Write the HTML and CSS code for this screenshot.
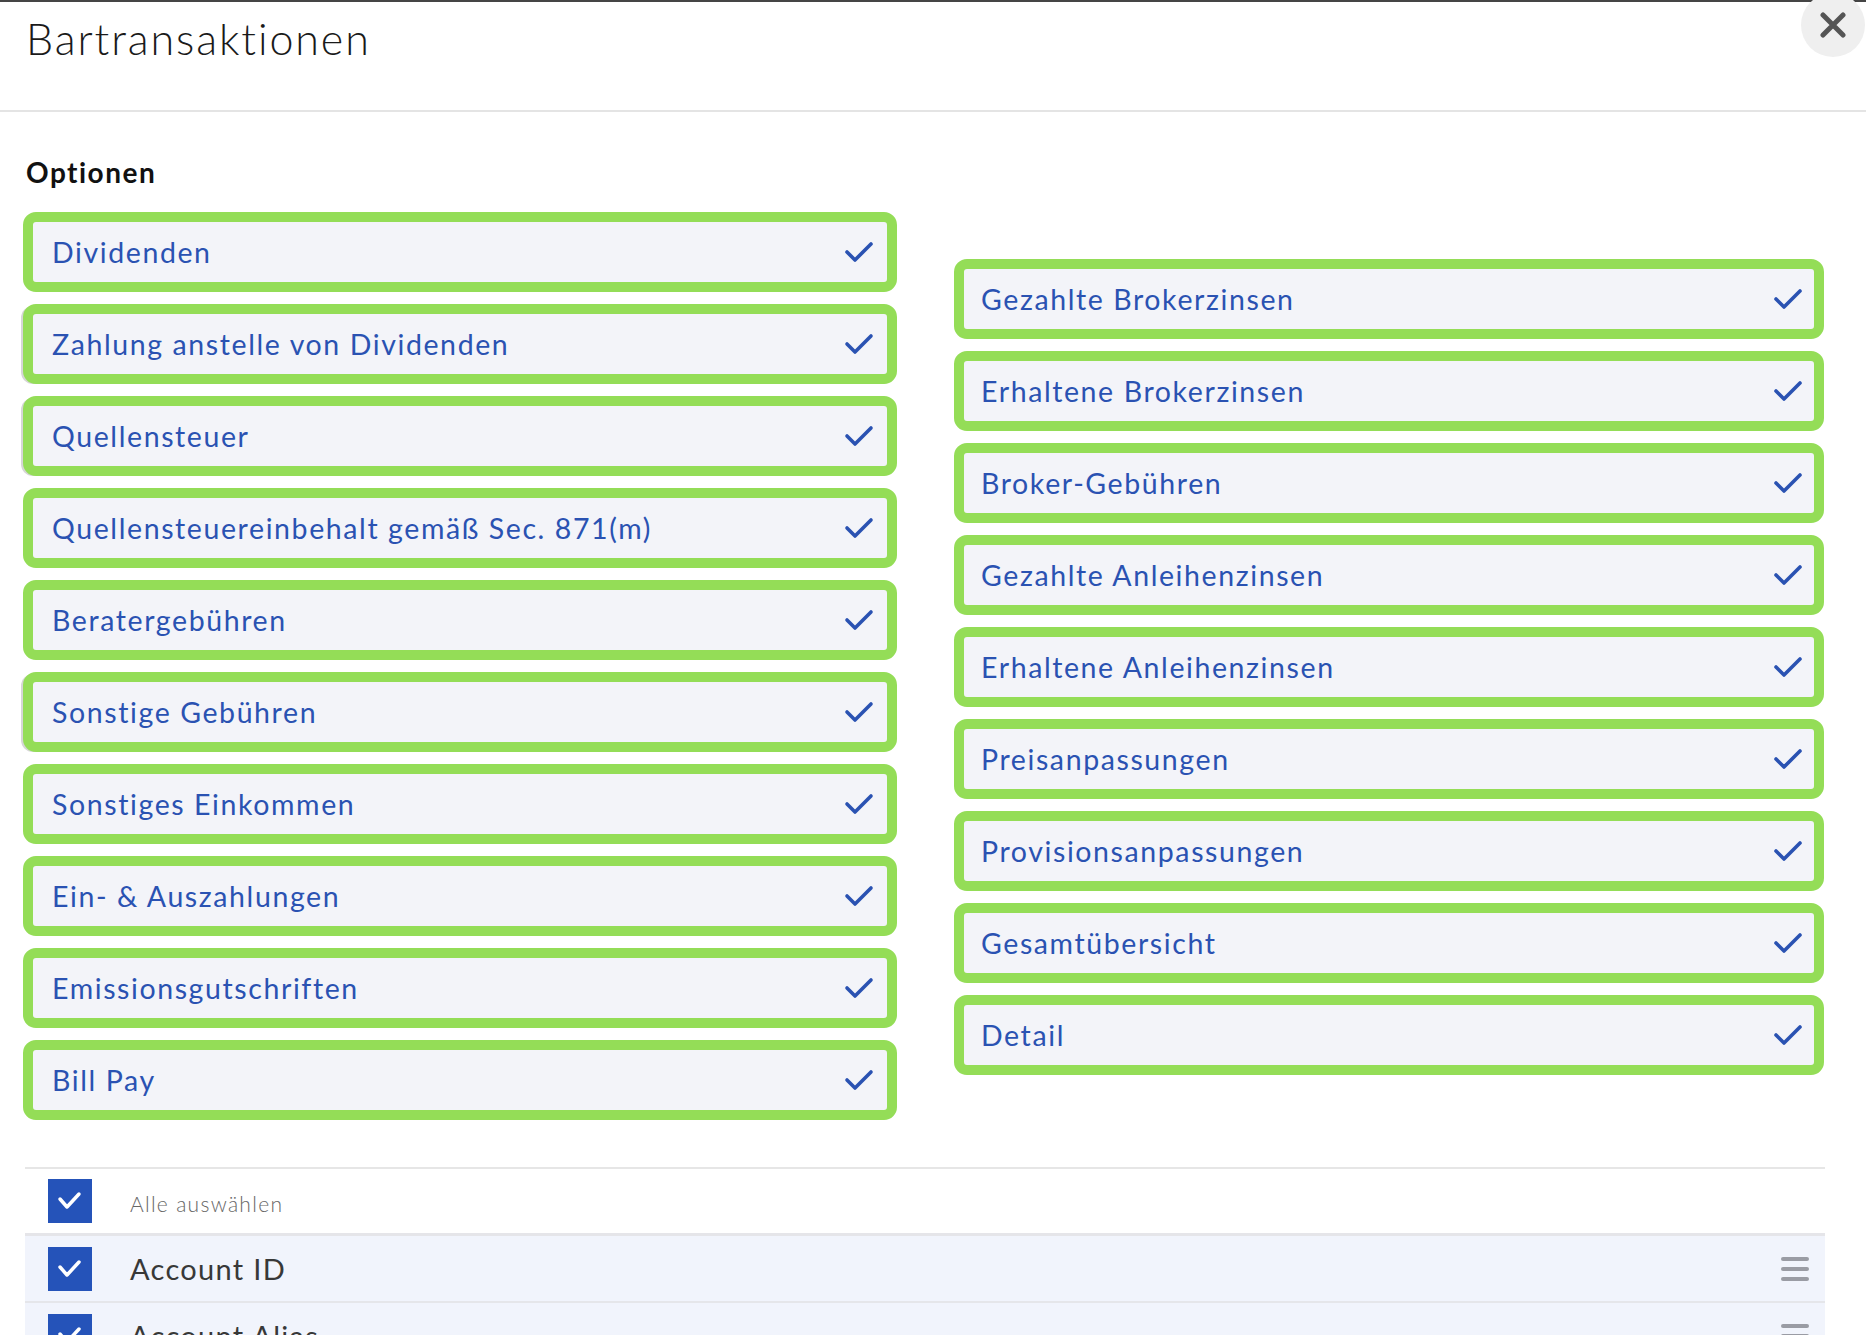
FILE: index.html
```html
<!DOCTYPE html>
<html lang="de">
<head>
<meta charset="utf-8">
<title>Bartransaktionen</title>
<link rel="stylesheet" href="styles.css">
</head>
<body>
<div class="modal">
  <header class="modal-header">
    <h1 class="title">Bartransaktionen</h1>
    <button class="close" aria-label="Schließen">
      <svg width="26" height="26" viewBox="0 0 26 26"><path d="M3 3 L23 23 M23 3 L3 23" stroke="#555" stroke-width="5" stroke-linecap="round" fill="none"/></svg>
    </button>
  </header>

  <section class="options">
    <h2 class="options-title">Optionen</h2>
    <div class="option-grid">
      <div class="col col-left">
        <div class="opt"><span>Dividenden</span><svg class="chk" width="30" height="22" viewBox="0 0 30 22"><polyline points="3,11 11,19 27,3" /></svg></div>
        <div class="opt shadow"><span>Zahlung anstelle von Dividenden</span><svg class="chk" width="30" height="22" viewBox="0 0 30 22"><polyline points="3,11 11,19 27,3" /></svg></div>
        <div class="opt shadow"><span>Quellensteuer</span><svg class="chk" width="30" height="22" viewBox="0 0 30 22"><polyline points="3,11 11,19 27,3" /></svg></div>
        <div class="opt"><span>Quellensteuereinbehalt gemäß Sec. 871(m)</span><svg class="chk" width="30" height="22" viewBox="0 0 30 22"><polyline points="3,11 11,19 27,3" /></svg></div>
        <div class="opt"><span>Beratergebühren</span><svg class="chk" width="30" height="22" viewBox="0 0 30 22"><polyline points="3,11 11,19 27,3" /></svg></div>
        <div class="opt shadow"><span>Sonstige Gebühren</span><svg class="chk" width="30" height="22" viewBox="0 0 30 22"><polyline points="3,11 11,19 27,3" /></svg></div>
        <div class="opt"><span>Sonstiges Einkommen</span><svg class="chk" width="30" height="22" viewBox="0 0 30 22"><polyline points="3,11 11,19 27,3" /></svg></div>
        <div class="opt"><span>Ein- &amp; Auszahlungen</span><svg class="chk" width="30" height="22" viewBox="0 0 30 22"><polyline points="3,11 11,19 27,3" /></svg></div>
        <div class="opt"><span>Emissionsgutschriften</span><svg class="chk" width="30" height="22" viewBox="0 0 30 22"><polyline points="3,11 11,19 27,3" /></svg></div>
        <div class="opt"><span>Bill Pay</span><svg class="chk" width="30" height="22" viewBox="0 0 30 22"><polyline points="3,11 11,19 27,3" /></svg></div>
      </div>
      <div class="col col-right">
        <div class="opt"><span>Gezahlte Brokerzinsen</span><svg class="chk" width="30" height="22" viewBox="0 0 30 22"><polyline points="3,11 11,19 27,3" /></svg></div>
        <div class="opt"><span>Erhaltene Brokerzinsen</span><svg class="chk" width="30" height="22" viewBox="0 0 30 22"><polyline points="3,11 11,19 27,3" /></svg></div>
        <div class="opt"><span>Broker-Gebühren</span><svg class="chk" width="30" height="22" viewBox="0 0 30 22"><polyline points="3,11 11,19 27,3" /></svg></div>
        <div class="opt"><span>Gezahlte Anleihenzinsen</span><svg class="chk" width="30" height="22" viewBox="0 0 30 22"><polyline points="3,11 11,19 27,3" /></svg></div>
        <div class="opt"><span>Erhaltene Anleihenzinsen</span><svg class="chk" width="30" height="22" viewBox="0 0 30 22"><polyline points="3,11 11,19 27,3" /></svg></div>
        <div class="opt"><span>Preisanpassungen</span><svg class="chk" width="30" height="22" viewBox="0 0 30 22"><polyline points="3,11 11,19 27,3" /></svg></div>
        <div class="opt"><span>Provisionsanpassungen</span><svg class="chk" width="30" height="22" viewBox="0 0 30 22"><polyline points="3,11 11,19 27,3" /></svg></div>
        <div class="opt"><span>Gesamtübersicht</span><svg class="chk" width="30" height="22" viewBox="0 0 30 22"><polyline points="3,11 11,19 27,3" /></svg></div>
        <div class="opt"><span>Detail</span><svg class="chk" width="30" height="22" viewBox="0 0 30 22"><polyline points="3,11 11,19 27,3" /></svg></div>
      </div>
    </div>
  </section>

  <section class="fields">
    <div class="frow frow-all">
      <span class="cb"><svg width="26" height="20" viewBox="0 0 26 20"><polyline points="3,8 10,16 22,3"/></svg></span>
      <span class="flabel-small">Alle auswählen</span>
    </div>
    <div class="frow frow-item">
      <span class="cb"><svg width="26" height="20" viewBox="0 0 26 20"><polyline points="3,8 10,16 22,3"/></svg></span>
      <span class="flabel">Account ID</span>
      <span class="drag"><i></i><i></i><i></i></span>
    </div>
    <div class="frow frow-item">
      <span class="cb"><svg width="26" height="20" viewBox="0 0 26 20"><polyline points="3,8 10,16 22,3"/></svg></span>
      <span class="flabel">Account Alias</span>
      <span class="drag"><i></i><i></i><i></i></span>
    </div>
  </section>
</div>
</body>
</html>
```
FILE: styles.css
```css
html, body {
  margin: 0;
  padding: 0;
  background: #ffffff;
  font-family: "Lato", "Liberation Sans", sans-serif;
}
body {
  overflow: hidden;
  height: 1335px;
}
.modal {
  border-top: 2px solid #454545;
  position: relative;
}
.modal-header {
  border-bottom: 2px solid #e4e4e4;
  padding-left: 26px;
  box-sizing: border-box;
  height: 110px;
}
.title {
  margin: 0;
  padding-top: 11px;
  font-size: 43px;
  font-weight: 300;
  color: #1a1a1a;
  line-height: 52px;
  letter-spacing: 1.9px;
}
.close {
  position: absolute;
  top: -9px;
  right: 1px;
  width: 64px;
  height: 64px;
  border-radius: 50%;
  border: none;
  background: #efefef;
  display: flex;
  align-items: center;
  justify-content: center;
  padding: 0;
}
.options {
  padding: 0 0 0 23px;
}
.options-title {
  margin: 0;
  padding-top: 42px;
  padding-left: 3px;
  font-size: 28px;
  font-weight: 700;
  line-height: 36px;
  color: #111;
  height: 58px;
  letter-spacing: 1.5px;
}
.option-grid {
  display: grid;
  grid-template-columns: 874px 870px;
  column-gap: 57px;
}
.col {
  display: flex;
  flex-direction: column;
  gap: 12px;
}
.col-right {
  padding-top: 47px;
}
.opt {
  height: 80px;
  box-sizing: border-box;
  border: 10px solid #94dd57;
  border-radius: 13px;
  background: #f3f4f9;
  display: flex;
  align-items: center;
  justify-content: space-between;
  padding: 0 13px 0 19px;
  font-size: 28.5px;
  color: #2a52b2;
  letter-spacing: 1.6px;
}
.col-right .opt {
  padding-left: 17px;
  padding-right: 11px;
}
.opt.shadow {
  box-shadow: -3px 1px 0 -1px #d6d6d6;
}
.chk polyline {
  fill: none;
  stroke: #2a52b2;
  stroke-width: 3.6;
  stroke-linecap: round;
  stroke-linejoin: round;
}
.fields {
  margin: 47px 41px 0 25px;
  border-top: 2px solid #e6e6e6;
}
.frow {
  display: flex;
  align-items: center;
  padding-left: 23px;
  box-sizing: border-box;
}
.frow-all {
  height: 67px;
  border-bottom: 3px solid #e5e5e9;
}
.frow-item {
  height: 67px;
  background: #f1f4fc;
  border-bottom: 2px solid #e5e6ea;
  padding-right: 16px;
}
.cb {
  width: 44px;
  height: 44px;
  background: #2553b9;
  display: flex;
  align-items: center;
  justify-content: center;
  flex: none;
}
.cb polyline {
  fill: none;
  stroke: #ffffff;
  stroke-width: 3.5;
  stroke-linecap: round;
  stroke-linejoin: round;
}
.flabel-small {
  margin-left: 38px;
  font-size: 21px;
  font-weight: 300;
  color: #666666;
  padding-top: 4px;
  letter-spacing: 1.3px;
}
.flabel {
  margin-left: 38px;
  font-size: 29px;
  color: #383838;
  flex: 1;
  letter-spacing: 1.3px;
}
.drag {
  display: flex;
  flex-direction: column;
  gap: 6px;
  width: 28px;
}
.drag i {
  display: block;
  height: 4px;
  border-radius: 2px;
  background: #9a9ca4;
}
```
